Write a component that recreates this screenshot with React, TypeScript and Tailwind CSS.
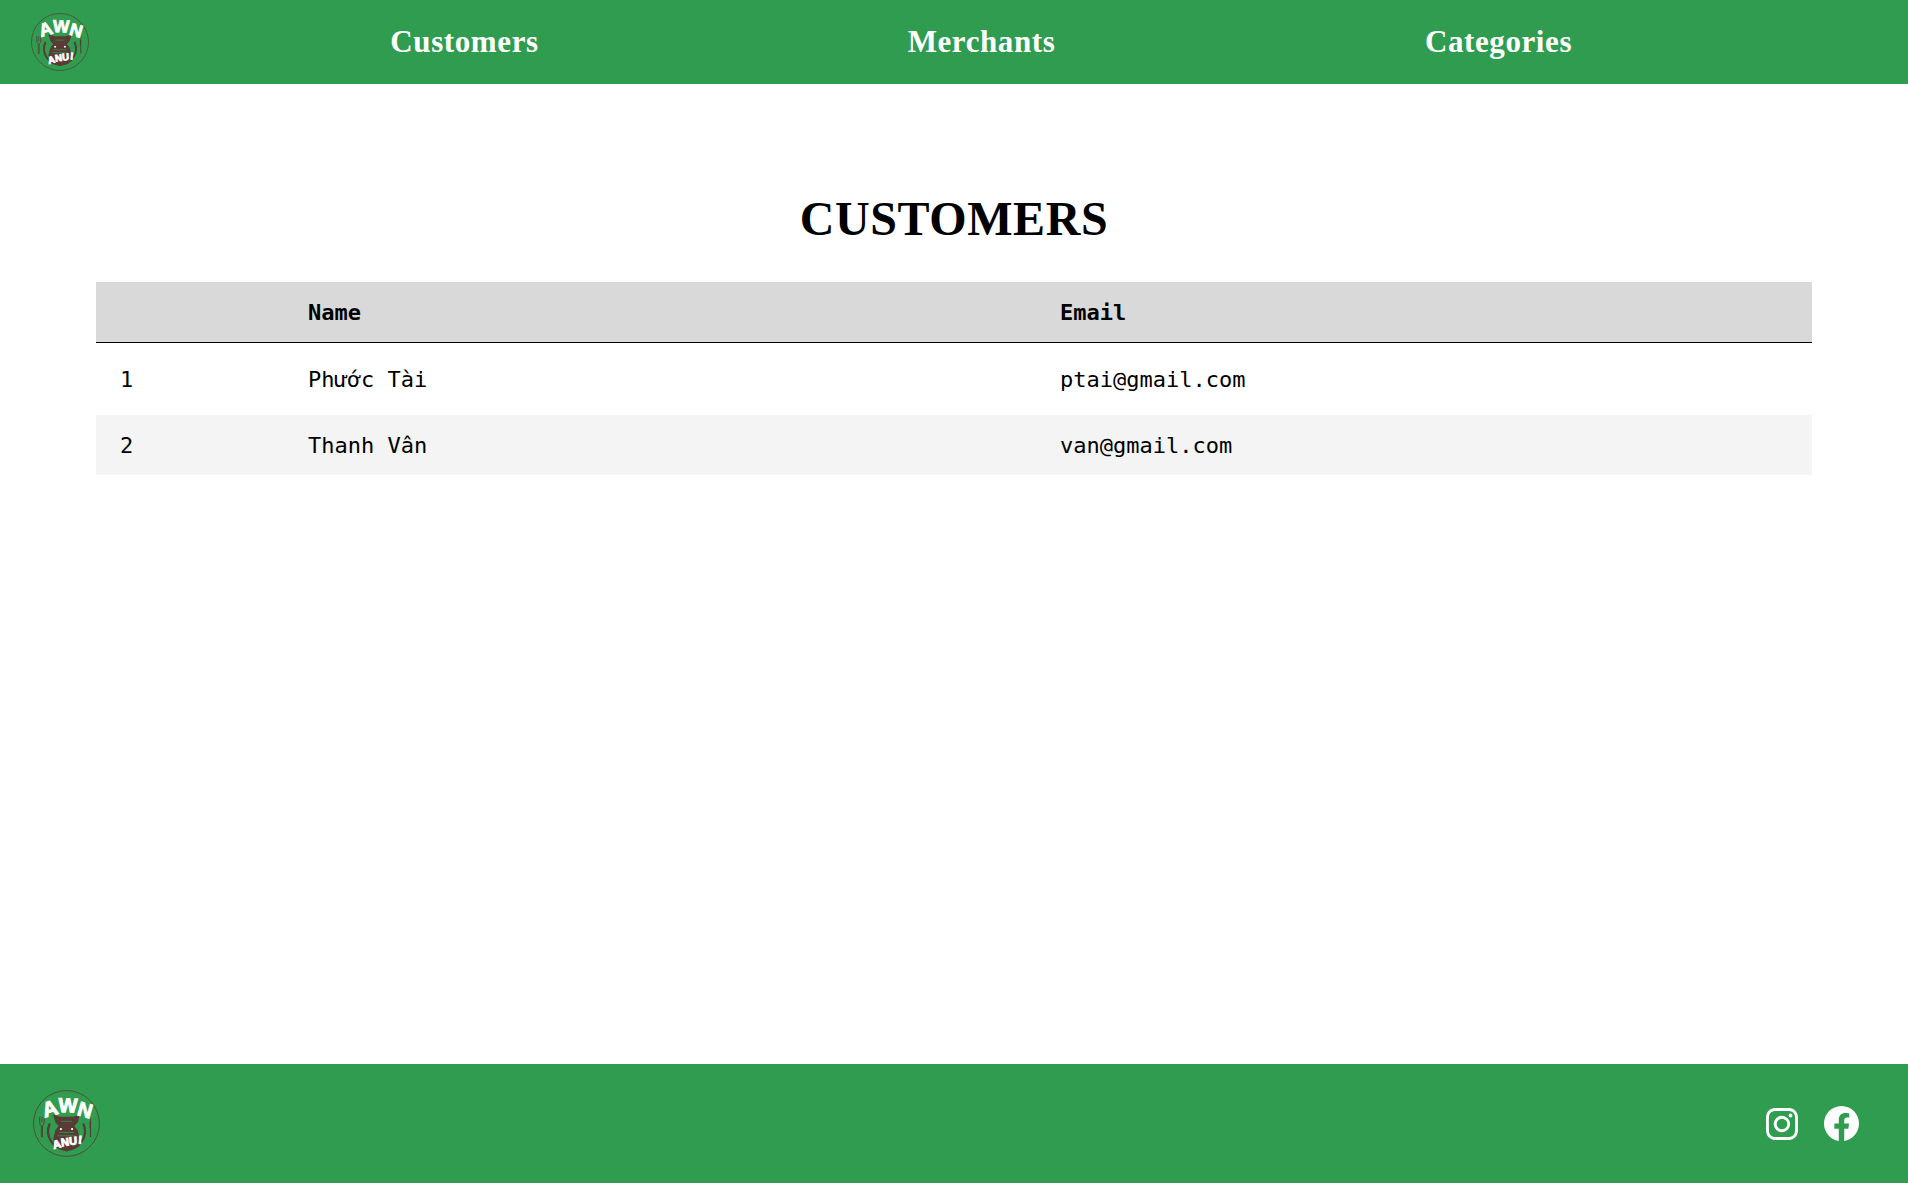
import { BsFacebook, BsInstagram } from "react-icons/bs";

const navLinks = ["Customers", "Merchants", "Categories"];

const customers = [
  { id: 1, name: "Phước Tài", email: "ptai@gmail.com" },
  { id: 2, name: "Thanh Vân", email: "van@gmail.com" },
];

const logoLetters = [
  { ch: "A", x: 17, y: 23, r: -16, s: 19 },
  { ch: "W", x: 31, y: 20, r: 2, s: 18 },
  { ch: "N", x: 45, y: 24, r: 16, s: 18 },
  { ch: "A", x: 22, y: 52, r: -14, s: 10 },
  { ch: "N", x: 29, y: 50, r: -8, s: 10 },
  { ch: "U", x: 36, y: 49, r: -4, s: 10 },
  { ch: "!", x: 42, y: 48, r: 4, s: 10 },
];

function Logo({ size }: { size: number }) {
  return (
    <svg width={size} height={size} viewBox="0 0 60 60" className="shrink-0">
      <circle cx="30" cy="30" r="29.500" fill="none" stroke="#5a3a34" strokeWidth="0.700" />
      {/* fork + knife */}
      <path d="M6 24v5q0 2 1.500 3v10h1V32q1.500-1 1.500-3v-5M8 24v5" fill="none" stroke="#5a3a34" strokeWidth="0.800" />
      <path d="M52 24q-2 5-1.500 10h.5v8h1Z" fill="#5a3a34" />
      {/* plate + head */}
      <path d="M15 30a16.500 16.500 0 1 0 30 0" fill="none" stroke="#5a3a34" strokeWidth="2" />
      <path d="M18 22l6 2h12l6-2-2 7-3 3 3 4 2 8-3 7-9 4-9-4-3-7 2-8 3-4-3-3Z" fill="#5a3a34" />
      <path d="M25 28h10M23 38h14M22 41h16" stroke="#2f9c50" strokeWidth="0.700" />
      <circle cx="25" cy="35" r="1" fill="#fff" />
      <circle cx="35" cy="35" r="1" fill="#fff" />
      {logoLetters.map((l, i) => (
        <text
          key={i}
          x={l.x}
          y={l.y}
          textAnchor="middle"
          transform={`rotate(${l.r} ${l.x} ${l.y})`}
          fontSize={l.s}
          fontWeight="700"
          fill="#ffffff"
          stroke="#ffffff"
          strokeWidth="0.800"
          fontFamily="'Liberation Sans', sans-serif"
        >
          {l.ch}
        </text>
      ))}
    </svg>
  );
}

export default function App() {
  return (
    <div className="min-h-[1183px] flex flex-col bg-white">
      <header className="h-[84px] bg-[#2f9c50] flex items-center pl-[31px]">
        <Logo size={58} />
        <nav className="flex-1 grid grid-cols-3 pl-[117px] pr-[151px]">
          {navLinks.map((link) => (
            <a
              key={link}
              className="text-center text-white font-bold text-[31px] tracking-[0.6px] font-['Liberation_Serif',serif]"
            >
              {link}
            </a>
          ))}
        </nav>
      </header>

      <main className="flex-1 px-24 pt-[109px]">
        <h1 className="text-center text-black font-bold text-[48px] tracking-[0.6px] leading-[52px] mb-[37px] font-['Liberation_Serif',serif]">
          CUSTOMERS
        </h1>
        <table className="w-full border-separate border-spacing-0 text-[22px] text-black font-['DejaVu_Sans_Mono','Liberation_Mono',monospace]">
          <thead>
            <tr className="bg-[#d9d9d9] h-[61px] text-left">
              <th className="w-[212px] border-b border-black" />
              <th className="w-[752px] border-b border-black font-bold">Name</th>
              <th className="border-b border-black font-bold">Email</th>
            </tr>
          </thead>
          <tbody>
            {customers.map((c) => (
              <tr key={c.id} className={c.id % 2 === 0 ? "bg-[#f4f4f4] h-[60px]" : "h-[72px]"}>
                <td className="pl-6">{c.id}</td>
                <td>{c.name}</td>
                <td>{c.email}</td>
              </tr>
            ))}
          </tbody>
        </table>
      </main>

      <footer className="h-[119px] bg-[#2f9c50] flex items-center justify-between pl-[33px] pr-[49px]">
        <Logo size={67} />
        <div className="flex items-center gap-[26px] text-white">
          <BsInstagram size={32} />
          <BsFacebook size={35} />
        </div>
      </footer>
    </div>
  );
}
